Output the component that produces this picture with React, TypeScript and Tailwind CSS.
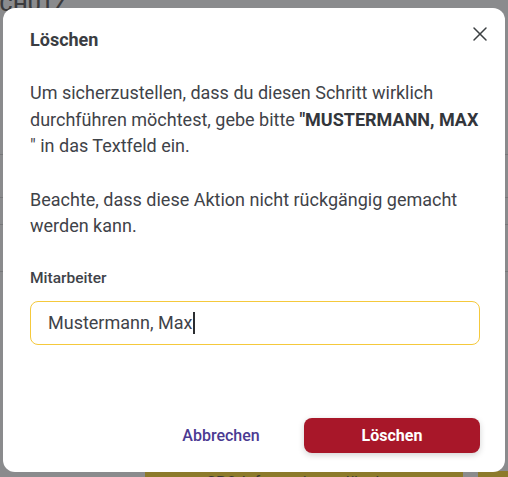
import { X } from "lucide-react";

export default function App() {
  return (
    <div className="relative h-[477px] w-[508px] overflow-hidden bg-[#8a8b8d] font-['Roboto',sans-serif]">
      {/* dimmed page behind the modal */}
      <div className="absolute inset-0">
        <div className="absolute left-[-13px] top-[-11px] text-[20px] font-medium tracking-wide text-[#3a3b3d]">SCHUTZ</div>
        <div className="mt-[124px] flex flex-col">
          <div className="h-[31px] border-b border-[#77787a]" />
          <div className="h-[43px] border-b border-[#77787a]" />
          <div className="h-[27px] border-b border-[#77787a]" />
          <div className="h-[47px] border-b border-[#77787a]" />
        </div>
        <div className="absolute bottom-[-20px] left-[145px] flex h-[26px] w-[318px] items-start justify-center bg-[#8c7a2b] text-[16px] text-[#3b3a30]">
          SPO-Informationen löschen
        </div>
        <div className="absolute bottom-[-20px] left-[478px] h-[26px] w-[40px] bg-[#8c7a2b]" />
      </div>

      {/* modal */}
      <div className="absolute left-[3px] top-[8px] flex h-[464px] w-[502px] flex-col rounded-[12px] bg-white pl-[27px] pr-[25px] pt-[20px] pb-[19px] text-[#3f4349]">
        <div className="flex items-center justify-between">
          <h2 className="text-[18px] font-bold leading-[24px] text-[#3a3d42]">Löschen</h2>
          <button className="-mr-[12px] -mt-[12px] text-[#3c4043]">
            <X size={24} strokeWidth={1.5} />
          </button>
        </div>

        <p className="mt-[28px] text-[18px] leading-[26.5px]">
          Um sicherzustellen, dass du diesen Schritt wirklich durchführen möchtest, gebe bitte{" "}
          <span className="font-bold text-[#33363b]">"MUSTERMANN, MAX</span> " in das Textfeld ein.
        </p>

        <p className="mt-[27px] text-[18px] leading-[26.5px]">
          Beachte, dass diese Aktion nicht rückgängig gemacht werden kann.
        </p>

        <label className="mt-[28px] text-[15.5px] font-medium leading-[20px] text-[#3f4349]">Mitarbeiter</label>
        <div className="mt-[13px] flex h-[44px] items-center rounded-[8px] border border-[#f5c93c] px-[17px] text-[18px] text-[#3f4349]">
          <span>Mustermann, Max</span>
          <span className="ml-[1px] h-[22px] w-[2px] bg-[#2b2d30]" />
        </div>

        <div className="mt-auto flex items-center justify-end gap-[23px]">
          <button className="h-[35px] w-[120px] text-[16px] font-medium text-[#4b3a92]">Abbrechen</button>
          <button className="h-[35px] w-[176px] rounded-[8px] bg-[#a81729] text-[16px] font-bold text-white shadow-[0_2px_6px_rgba(0,0,0,0.18)]">
            Löschen
          </button>
        </div>
      </div>
    </div>
  );
}
